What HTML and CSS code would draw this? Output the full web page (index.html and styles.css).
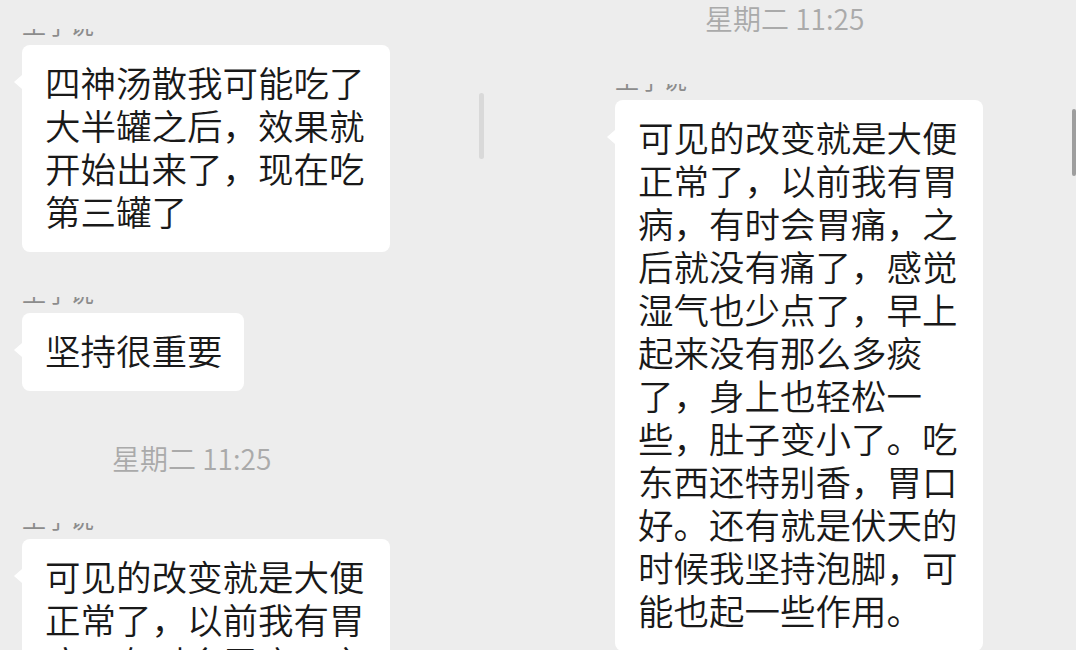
FILE: index.html
```html
<!DOCTYPE html>
<html lang="zh-CN">
<head>
<meta charset="utf-8">
<title>聊天记录</title>
<link rel="stylesheet" href="styles.css">
</head>
<body>
<div class="canvas">
  <section class="screen screen-left">
    <div class="msg msg-first">
      <div class="name"><span>王子说</span></div>
      <div class="bubble">四神汤散我可能吃了大半罐之后，效果就开始出来了，现在吃第三罐了</div>
    </div>
    <div class="msg msg-second">
      <div class="name"><span>王子说</span></div>
      <div class="bubble">坚持很重要</div>
    </div>
    <div class="time time-left">星期二 11:25</div>
    <div class="msg msg-third">
      <div class="name"><span>王子说</span></div>
      <div class="bubble">可见的改变就是大便正常了，以前我有胃病，有时会胃痛，之后就没有痛了，感觉湿气也少点了，早上起来没有那么多痰了，身上也轻松一些，肚子变小了。吃东西还特别香，胃口好。还有就是伏天的时候我坚持泡脚，可能也起一些作用。</div>
    </div>
    <div class="scrollbar scrollbar-faint"></div>
  </section>
  <section class="screen screen-right">
    <div class="time time-right">星期二 11:25</div>
    <div class="msg msg-right">
      <div class="name"><span>王子说</span></div>
      <div class="bubble">可见的改变就是大便正常了，以前我有胃病，有时会胃痛，之后就没有痛了，感觉湿气也少点了，早上起来没有那么多痰了，身上也轻松一些，肚子变小了。吃东西还特别香，胃口好。还有就是伏天的时候我坚持泡脚，可能也起一些作用。</div>
    </div>
    <div class="scrollbar scrollbar-dark"></div>
  </section>
</div>
</body>
</html>
```

FILE: styles.css
```css
html, body {
  margin: 0;
  padding: 0;
}

body {
  width: 1080px;
  height: 654px;
  overflow: hidden;
  background: #ffffff;
  font-family: "Noto Sans CJK SC", "Noto Sans", sans-serif;
}

.canvas {
  display: flex;
  width: 1076px;
  height: 650px;
  background: #ededed;
  overflow: hidden;
}

.screen {
  position: relative;
  display: flex;
  flex-direction: column;
  align-items: flex-start;
  padding-left: 22px;
  box-sizing: border-box;
}

.screen-left {
  width: 593px;
  flex: none;
  padding-top: 29px;
}

.screen-right {
  flex: 1;
}

.msg {
  display: flex;
  flex-direction: column;
  align-items: flex-start;
}

.msg-second {
  margin-top: 45px;
}

.msg-third {
  margin-top: 45px;
}

.msg-right {
  margin-top: 46px;
}

.name {
  height: 8px;
  overflow: hidden;
  display: flex;
  align-items: flex-end;
  margin-bottom: 8px;
  color: #8c8c8c;
  font-size: 24px;
}

.name span {
  line-height: 24px;
  margin-bottom: 1px;
}

.bubble {
  position: relative;
  max-width: 368px;
  box-sizing: border-box;
  padding: 14.5px 21px 20.5px 23px;
  background: #ffffff;
  border-radius: 8px;
  color: #191919;
  font-size: 35.5px;
  font-weight: 350;
  line-height: 43px;
  word-break: break-all;
}

.bubble::before {
  content: "";
  position: absolute;
  left: -8px;
  top: 30px;
  border-top: 7px solid transparent;
  border-bottom: 7px solid transparent;
  border-right: 8px solid #ffffff;
}

.time {
  font-size: 28px;
  font-weight: 350;
  line-height: 40px;
  color: #aaaaaa;
  white-space: nowrap;
}

.time-left {
  margin-top: 47px;
  padding-left: 90px;
}

.time-right {
  margin-top: -2px;
  padding-left: 90px;
}

.scrollbar {
  position: absolute;
  left: 479px;
  border-radius: 3px;
}

.scrollbar-faint {
  top: 93px;
  width: 5px;
  height: 66px;
  background: #d9d9d9;
}

.scrollbar-dark {
  top: 109px;
  width: 4px;
  height: 67px;
  background: #9e9e9e;
}
```
